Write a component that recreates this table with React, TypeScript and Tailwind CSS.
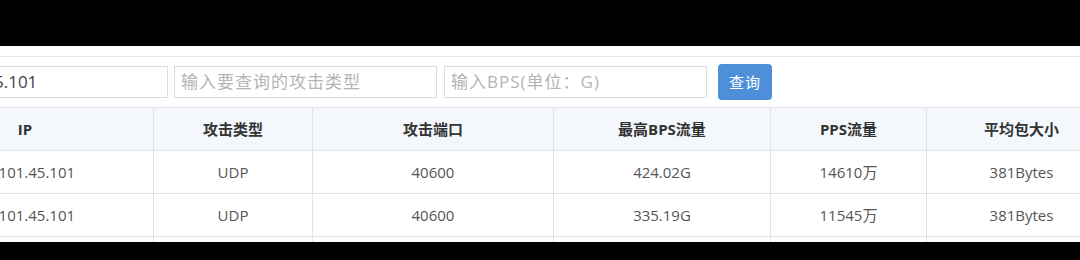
import React from "react";

const cols = [
  "w-[257px]",
  "w-[159px]",
  "w-[241px]",
  "w-[217px]",
  "w-[156px]",
  "w-[190px]",
];

const headers = ["IP", "攻击类型", "攻击端口", "最高BPS流量", "PPS流量", "平均包大小"];

const rows = [
  ["103.101.45.101", "UDP", "40600", "424.02G", "14610万", "381Bytes"],
  ["103.101.45.101", "UDP", "40600", "335.19G", "11545万", "381Bytes"],
  ["103.101.45.101", "UDP", "40600", "301.77G", "10385万", "381Bytes"],
];

const font = { fontFamily: '"Open Sans", "Noto Sans CJK SC", sans-serif' };

export default function App() {
  return (
    <div
      className="w-[1080px] h-[260px] bg-black overflow-hidden flex flex-col"
      style={font}
    >
      <div className="h-[46px] shrink-0" />
      <div className="h-[196px] shrink-0 bg-white overflow-hidden">
        <div className="mt-[10px] border-t border-[#e6e6e6] -ml-[103px] w-[1300px]">
          <div className="mt-[7px] h-[36px] flex items-center pl-[8px]">
            <div className="w-[263px] h-[32px] border border-[#dcdcdc] flex items-center pl-[11px] text-[17px] text-[#444] whitespace-nowrap">
              103.101.45.101
            </div>
            <div className="ml-[6px] w-[263px] h-[32px] border border-[#dcdcdc] flex items-center pl-[6px] text-[17px] tracking-[1px] text-[#b4b4b4] whitespace-nowrap">
              输入要查询的攻击类型
            </div>
            <div className="ml-[7px] w-[263px] h-[32px] border border-[#dcdcdc] flex items-center pl-[6px] text-[17px] tracking-[1px] text-[#b4b4b4] whitespace-nowrap">
              输入BPS(单位：G)
            </div>
            <div className="ml-[11px] w-[54px] h-[36px] rounded-[4px] bg-[#4e8fd9] flex items-center justify-center text-[15px] tracking-[1px] text-white">
              查询
            </div>
          </div>
          <div className="mt-[7px]">
            <div className="flex h-[44px] border-t border-b border-[#e3e3e3] bg-[#f4f8fc]">
              {headers.map((h, i) => (
                <div
                  key={i}
                  className={`${cols[i]} shrink-0 border-r border-[#e3e3e3] flex items-center justify-center text-[15px] font-bold text-[#333]`}
                >
                  {h}
                </div>
              ))}
            </div>
            {rows.map((r, ri) => (
              <div key={ri} className="flex h-[43px] border-b border-[#e3e3e3]">
                {r.map((c, i) => (
                  <div
                    key={i}
                    className={`${cols[i]} ${i === 0 ? "pr-[6px]" : ""} shrink-0 border-r border-[#e3e3e3] flex items-center justify-center text-[15px] text-[#555] whitespace-nowrap`}
                  >
                    {c}
                  </div>
                ))}
              </div>
            ))}
          </div>
        </div>
      </div>
      <div className="flex-1" />
    </div>
  );
}
